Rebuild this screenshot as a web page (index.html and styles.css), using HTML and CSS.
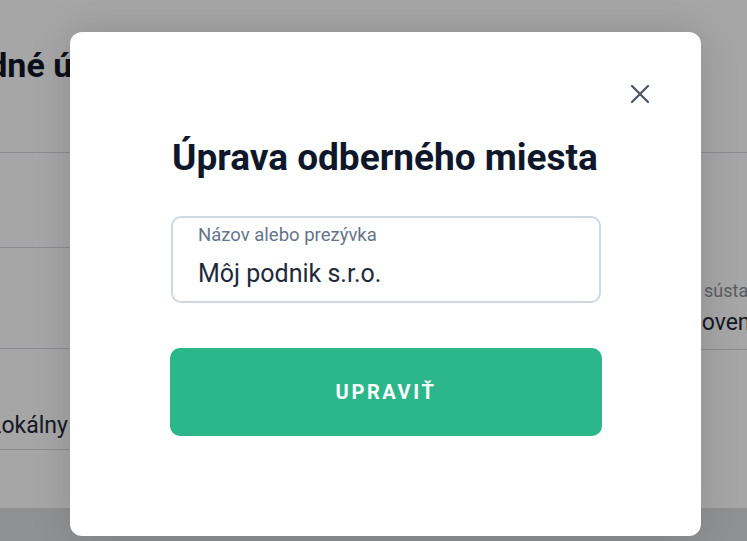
FILE: index.html
```html
<!DOCTYPE html>
<html lang="sk">
<head>
<meta charset="utf-8">
<title>Úprava odberného miesta</title>
<link rel="stylesheet" href="styles.css">
</head>
<body>
<div class="page">
  <main class="content">
    <h1 class="page-title">Základné údaje</h1>
    <div class="cols">
      <div class="col col-left">
        <div class="row row-first"></div>
        <div class="row"></div>
        <div class="row row-last"><span class="value">Lokálny</span></div>
      </div>
      <div class="col col-right">
        <div class="row row-tall">
          <span class="label">sústava</span>
          <span class="value">novembra 2023</span>
        </div>
      </div>
    </div>
  </main>
  <footer class="footer"></footer>
</div>
<div class="overlay"></div>
<div class="modal" role="dialog" aria-labelledby="modal-title">
  <button class="close" aria-label="Zavrieť">
    <svg width="20" height="20" viewBox="0 0 20 20" fill="none"><path d="M2 2L18 18M18 2L2 18" stroke="#4a5568" stroke-width="2.2" stroke-linecap="round"/></svg>
  </button>
  <h2 class="modal-title" id="modal-title">Úprava odberného miesta</h2>
  <label class="field">
    <span class="field-label">Názov alebo prezývka</span>
    <input class="field-input" type="text" value="Môj podnik s.r.o.">
  </label>
  <button class="submit">UPRAVIŤ</button>
</div>
</body>
</html>
```
FILE: styles.css
```css
* { box-sizing: border-box; }
html, body { margin: 0; padding: 0; }
body {
  font-family: Roboto, "Liberation Sans", sans-serif;
  background: #fff;
  width: 747px;
  height: 541px;
  overflow: hidden;
  position: relative;
}
.page {
  height: 541px;
  display: flex;
  flex-direction: column;
}
.content {
  flex: 1;
  margin-left: -96px;
  padding-top: 45px;
}
.page-title {
  margin: 0;
  font-size: 34px;
  font-weight: 700;
  color: #111827;
  line-height: 40px;
  height: 107px;
  white-space: nowrap;
}
.cols {
  display: flex;
}
.col {
  flex: none;
}
.col-left {
  width: 514px;
  padding-left: 85px;
}
.col-right {
  margin-left: 271px;
  width: 260px;
}
.row {
  border-top: 1px solid #d6d9dd;
  height: 101px;
  display: flex;
  flex-direction: column;
  justify-content: flex-end;
  padding-bottom: 12px;
}
.row-first { height: 95px; }
.row-last {
  height: 102px;
  border-bottom: 1px solid #d6d9dd;
  padding-bottom: 9px;
}
.row-tall {
  height: 198px;
  border-bottom: 1px solid #d6d9dd;
  padding-bottom: 12px;
}
.label {
  font-size: 18px;
  line-height: 22px;
  color: #8c9096;
  margin-left: 15px;
  margin-bottom: 7px;
  white-space: nowrap;
}
.value {
  font-size: 23px;
  line-height: 28px;
  color: #1f2937;
  white-space: nowrap;
}
.footer {
  height: 33px;
  background: #dcdfe2;
}
.overlay {
  position: absolute;
  inset: 0;
  background: rgba(0, 0, 0, 0.35);
}
.modal {
  position: absolute;
  left: 70px;
  top: 32px;
  width: 631px;
  height: 504px;
  background: #fff;
  border-radius: 12px;
  box-shadow: 0 0 40px rgba(0, 0, 0, 0.15);
  padding: 103px 99px 0 100px;
  display: flex;
  flex-direction: column;
}
.close {
  position: absolute;
  right: 51px;
  top: 52px;
  width: 20px;
  height: 20px;
  padding: 0;
  border: 0;
  background: none;
  display: flex;
}
.modal-title {
  margin: 0 0 36px;
  font-size: 37px;
  font-weight: 700;
  line-height: 45px;
  color: #0f172a;
  padding-left: 2px;
  white-space: nowrap;
}
.field {
  display: flex;
  flex-direction: column;
  height: 87px;
  border: 2px solid #cfd8e3;
  border-radius: 10px;
  padding: 7px 25px 0;
  margin: 0 1px 45px 1px;
}
.field-label {
  font-size: 18.5px;
  color: #64748b;
  line-height: 20px;
}
.field-input {
  border: 0;
  outline: none;
  padding: 0;
  margin-top: 14px;
  font-family: Roboto, sans-serif;
  font-size: 25px;
  line-height: 29px;
  height: 29px;
  color: #1e293b;
  background: transparent;
}
.submit {
  height: 88px;
  border: 0;
  border-radius: 10px;
  background: #2bb78a;
  color: #fff;
  font-family: Roboto, sans-serif;
  font-size: 20px;
  font-weight: 700;
  letter-spacing: 2.6px;
  padding: 0;
}
```
